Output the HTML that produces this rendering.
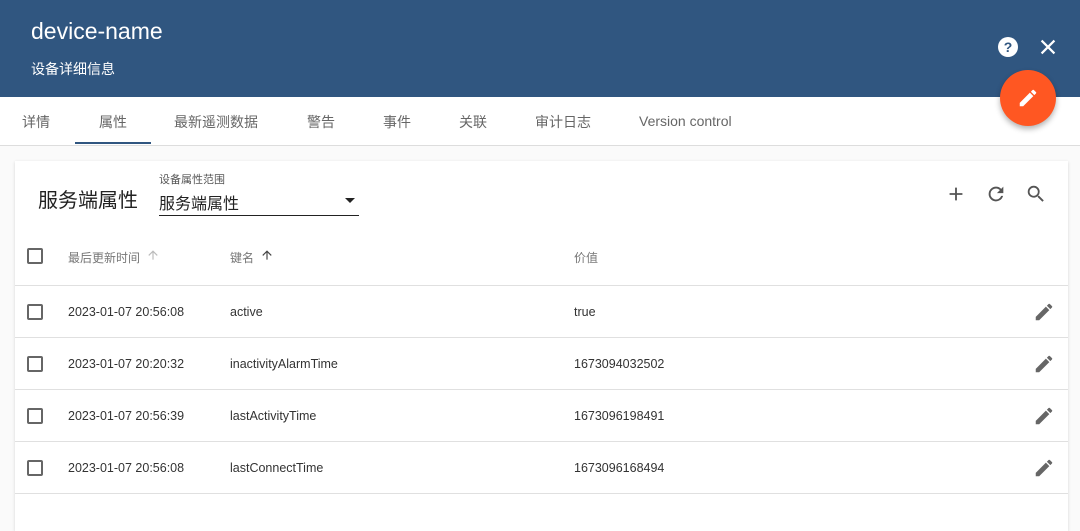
<!DOCTYPE html>
<html><head><meta charset="utf-8"><style>
*{box-sizing:border-box;margin:0;padding:0}
body{width:1080px;height:521px;overflow:hidden;background:#fafafa;font-family:"Liberation Sans","Noto Sans CJK SC",sans-serif;position:relative}
.hdr{position:absolute;left:0;top:0;width:1080px;height:97px;background:#305680;color:#fff}
.hdr h1{position:absolute;left:31px;top:18px;font-size:23px;font-weight:normal}
.hdr .sub{position:absolute;left:31px;top:59px;font-size:14px}
.tabs{position:absolute;left:0;top:97px;width:1080px;height:49px;background:#fff;border-bottom:1px solid #ddd}
.tab{position:absolute;top:15px;font-size:14px;color:#666}
.ink{position:absolute;left:75px;top:142px;width:76px;height:2px;background:#305680}
.fab{position:absolute;left:1000px;top:70px;width:56px;height:56px;border-radius:50%;background:#ff5722;box-shadow:0 3px 6px rgba(0,0,0,.3)}
.card{position:absolute;left:15px;top:161px;width:1053px;height:370px;background:#fff;box-shadow:0 1px 3px rgba(0,0,0,.15)}
.row{position:absolute;left:0;width:1053px;height:52px;border-bottom:1px solid #e0e0e0;font-size:12.5px;color:#333}
.row span{position:absolute;top:19px}
.cb{position:absolute;left:12px;top:18px;width:16px;height:16px;border:2px solid #666;border-radius:2px}
.th span{color:#777;font-size:12px}
</style></head><body>
<div class="hdr"><h1>device-name</h1><div class="sub">设备详细信息</div>
<svg style="position:absolute;left:996px;top:35px" width="24" height="24" viewBox="0 0 24 24"><circle cx="12" cy="12" r="10" fill="#fff"/><text x="12" y="17" text-anchor="middle" font-size="14" font-weight="bold" fill="#305680" font-family="Liberation Sans">?</text></svg>
<svg style="position:absolute;left:1037px;top:36px" width="22" height="22" viewBox="0 0 24 24"><path d="M5 5L19 19M19 5L5 19" stroke="#fff" stroke-width="2.4"/></svg>
</div>
<div class="tabs">
<span class="tab" style="left:22px">详情</span><span class="tab" style="left:99px">属性</span><span class="tab" style="left:174px">最新遥测数据</span><span class="tab" style="left:307px">警告</span><span class="tab" style="left:383px">事件</span><span class="tab" style="left:459px">关联</span><span class="tab" style="left:535px">审计日志</span><span class="tab" style="left:639px;top:16px">Version control</span>
</div>
<div class="ink"></div>
<div class="card">
<div style="position:absolute;left:23px;top:23px;font-size:20px;color:#222">服务端属性</div>
<div style="position:absolute;left:144px;top:10px;font-size:11px;color:#555">设备属性范围</div>
<div style="position:absolute;left:144px;top:29px;font-size:16px;color:#222">服务端属性</div>
<div style="position:absolute;left:330px;top:37px;border:5px solid transparent;border-top-color:#222;border-bottom:0"></div>
<div style="position:absolute;left:144px;top:54px;width:200px;height:1px;background:#222"></div>
<svg style="position:absolute;left:930px;top:22px" width="22" height="22" viewBox="0 0 24 24"><path d="M12 5v14M5 12h14" stroke="#555" stroke-width="2"/></svg>
<svg style="position:absolute;left:970px;top:22px" width="22" height="22" viewBox="0 0 24 24"><path d="M17.65 6.35A7.96 7.96 0 0 0 12 4a8 8 0 1 0 7.73 10h-2.08A6 6 0 1 1 12 6c1.66 0 3.14.69 4.22 1.78L13 11h7V4l-2.35 2.35z" fill="#555"/></svg>
<svg style="position:absolute;left:1010px;top:22px" width="22" height="22" viewBox="0 0 24 24"><path d="M15.5 14h-.79l-.28-.27A6.47 6.47 0 0 0 16 9.5 6.5 6.5 0 1 0 9.5 16c1.61 0 3.09-.59 4.23-1.57l.27.28v.79l5 4.99L20.49 19l-4.99-5zm-6 0C7.01 14 5 11.99 5 9.5S7.01 5 9.5 5 14 7.01 14 9.5 11.99 14 9.5 14z" fill="#555"/></svg>
<div class="row th" style="top:70px;height:55px"><div class="cb" style="top:17px"></div><span style="left:53px;top:18px">最后更新时间</span>
<svg style="position:absolute;left:131px;top:17px" width="14" height="14" viewBox="0 0 24 24"><path d="M4 12l1.41 1.41L11 7.83V20h2V7.83l5.58 5.59L20 12l-8-8-8 8z" fill="#bbb"/></svg>
<span style="left:215px;top:18px">键名</span>
<svg style="position:absolute;left:245px;top:17px" width="14" height="14" viewBox="0 0 24 24"><path d="M4 12l1.41 1.41L11 7.83V20h2V7.83l5.58 5.59L20 12l-8-8-8 8z" fill="#444"/></svg>
<span style="left:559px;top:18px">价值</span></div>
<div class="row" style="top:125px"><div class="cb"></div><span style="left:53px">2023-01-07 20:56:08</span><span style="left:215px">active</span><span style="left:559px">true</span></div>
<div class="row" style="top:177px"><div class="cb"></div><span style="left:53px">2023-01-07 20:20:32</span><span style="left:215px">inactivityAlarmTime</span><span style="left:559px">1673094032502</span></div>
<div class="row" style="top:229px"><div class="cb"></div><span style="left:53px">2023-01-07 20:56:39</span><span style="left:215px">lastActivityTime</span><span style="left:559px">1673096198491</span></div>
<div class="row" style="top:281px"><div class="cb"></div><span style="left:53px">2023-01-07 20:56:08</span><span style="left:215px">lastConnectTime</span><span style="left:559px">1673096168494</span></div>
<svg style="position:absolute;left:1018px;top:140px" width="22" height="22" viewBox="0 0 24 24"><path d="M3 17.25V21h3.75L17.81 9.94l-3.75-3.75L3 17.25zM20.71 7.04a1 1 0 0 0 0-1.41l-2.34-2.34a1 1 0 0 0-1.41 0l-1.83 1.83 3.75 3.75 1.83-1.83z" fill="#666"/></svg>
<svg style="position:absolute;left:1018px;top:192px" width="22" height="22" viewBox="0 0 24 24"><path d="M3 17.25V21h3.75L17.81 9.94l-3.75-3.75L3 17.25zM20.71 7.04a1 1 0 0 0 0-1.41l-2.34-2.34a1 1 0 0 0-1.41 0l-1.83 1.83 3.75 3.75 1.83-1.83z" fill="#666"/></svg>
<svg style="position:absolute;left:1018px;top:244px" width="22" height="22" viewBox="0 0 24 24"><path d="M3 17.25V21h3.75L17.81 9.94l-3.75-3.75L3 17.25zM20.71 7.04a1 1 0 0 0 0-1.41l-2.34-2.34a1 1 0 0 0-1.41 0l-1.83 1.83 3.75 3.75 1.83-1.83z" fill="#666"/></svg>
<svg style="position:absolute;left:1018px;top:296px" width="22" height="22" viewBox="0 0 24 24"><path d="M3 17.25V21h3.75L17.81 9.94l-3.75-3.75L3 17.25zM20.71 7.04a1 1 0 0 0 0-1.41l-2.34-2.34a1 1 0 0 0-1.41 0l-1.83 1.83 3.75 3.75 1.83-1.83z" fill="#666"/></svg>
</div>
<div class="fab"><svg style="position:absolute;left:17px;top:17px" width="22" height="22" viewBox="0 0 24 24"><path d="M3 17.25V21h3.75L17.81 9.94l-3.75-3.75L3 17.25zM20.71 7.04a1 1 0 0 0 0-1.41l-2.34-2.34a1 1 0 0 0-1.41 0l-1.83 1.83 3.75 3.75 1.83-1.83z" fill="#fff"/></svg></div>
</body></html>
